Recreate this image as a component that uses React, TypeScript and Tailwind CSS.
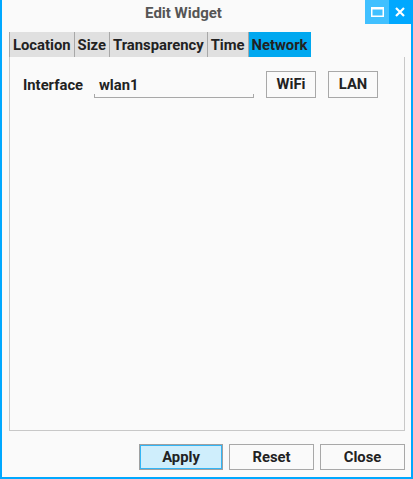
const tabs = ["Location", "Size", "Transparency", "Time", "Network"];

const App = () => {
  return (
    <div
      className="w-[413px] h-[479px] bg-[#fafafa] border-l-2 border-r-2 border-b-2 border-[#00a8ff] flex flex-col text-[#222]"
      style={{ fontFamily: "Roboto, 'Liberation Sans', sans-serif" }}
    >
      {/* title bar */}
      <div className="h-[28px] flex items-start">
        <div className="flex-1 h-[26px] flex items-center justify-center font-bold text-[15px] text-[#555]">
          Edit Widget
        </div>
        <div className="w-[24px] h-[24px] bg-[#40c0ff] flex items-center justify-center">
          <svg width="13" height="10" viewBox="0 0 13 10">
            <rect x="0.75" y="0.75" width="11.5" height="8.5" fill="none" stroke="white" strokeWidth="1.5" />
            <rect x="0" y="0" width="13" height="2.5" fill="white" />
          </svg>
        </div>
        <div className="w-[22px] h-[24px] bg-[#00a8ff] flex items-center justify-center">
          <svg width="10" height="10" viewBox="0 0 10 10">
            <path d="M1 1 L9 9 M9 1 L1 9" stroke="white" strokeWidth="2.2" />
          </svg>
        </div>
      </div>

      {/* tabs */}
      <div className="mt-[4px] ml-[7px] flex h-[25px] text-[14.8px] font-bold">
        {tabs.map((t, i) => (
          <div
            key={t}
            className={
              t === "Network"
                ? "px-[3px] pt-[1px] flex items-center bg-[#00a8f0]"
                : i === 0
                ? "px-[3px] pt-[1px] flex items-center bg-[#e0e0e0] border-l border-r border-[#a8a8a8]"
                : "px-[3px] pt-[1px] flex items-center bg-[#e0e0e0] border-r border-[#a8a8a8]"
            }
          >
            {t}
          </div>
        ))}
      </div>

      {/* panel */}
      <div className="ml-[7px] w-[396px] h-[374px] border border-t-0 border-[#c8c8c8]">
        <div className="flex items-center mt-[13px] h-[28px] text-[14.8px] font-bold">
          <div className="ml-[13px] w-[71px] pt-[2px]">Interface</div>
          <div className="w-[160px] h-[26px] relative flex items-center pl-[5px] pt-[2px]">
            wlan1
            <div className="absolute left-0 right-0 bottom-[-1px] h-[4px] border-l border-r border-b border-[#a8a8a8]" />
          </div>
          <button className="ml-[12px] w-[50px] h-[27px] pt-[1px] border border-[#a8a8a8] bg-[#fafafa] font-bold">
            WiFi
          </button>
          <button className="ml-[12px] w-[50px] h-[27px] pt-[1px] border border-[#a8a8a8] bg-[#fafafa] font-bold">
            LAN
          </button>
        </div>
      </div>

      {/* footer buttons */}
      <div className="mt-[13px] flex justify-end pr-[6px] gap-[6px] text-[14.8px] font-bold">
        <button className="w-[84px] h-[26px] border border-[#a0a0a0] bg-[#cfeefc] font-bold">
          <div className="w-full h-full pt-[1px] border border-[#33b5f5] flex items-center justify-center">Apply</div>
        </button>
        <button className="w-[85px] h-[26px] pt-[1px] border border-[#a8a8a8] bg-[#fafafa] font-bold">Reset</button>
        <button className="w-[85px] h-[26px] pt-[1px] border border-[#a8a8a8] bg-[#fafafa] font-bold">Close</button>
      </div>
    </div>
  );
};
export default App;
